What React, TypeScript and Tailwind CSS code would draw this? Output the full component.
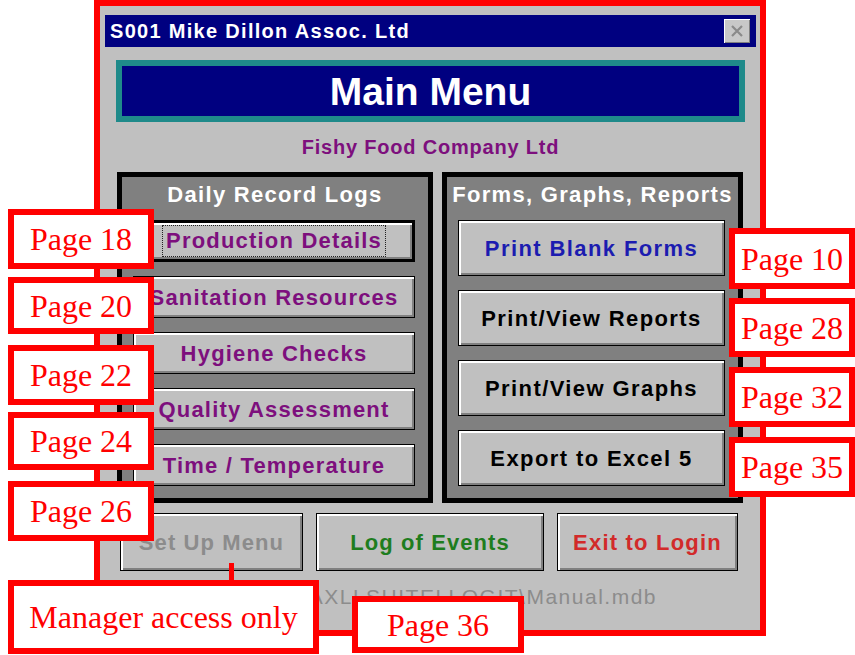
import React from 'react'

const btn =
  'flex items-center justify-center bg-[#c0c0c0] border border-black shadow-[inset_2px_2px_0_#ffffff,inset_-2px_-2px_0_#808080] font-bold'

const leftButtons = [
  { label: 'Production Details', focused: true },
  { label: 'Sanitation Resources' },
  { label: 'Hygiene Checks' },
  { label: 'Quality Assessment' },
  { label: 'Time / Temperature' },
]

const rightButtons = [
  { label: 'Print Blank Forms', color: 'text-[#1c1cb0]' },
  { label: 'Print/View Reports', color: 'text-black' },
  { label: 'Print/View Graphs', color: 'text-black' },
  { label: 'Export to Excel 5', color: 'text-black' },
]

// callout boxes laid over the form
const notes = [
  { text: 'Page 18', cls: 'left-[8px] top-[209px] w-[146px] h-[60px]' },
  { text: 'Page 20', cls: 'left-[8px] top-[277px] w-[146px] h-[57px]' },
  { text: 'Page 22', cls: 'left-[8px] top-[345px] w-[146px] h-[60px]' },
  { text: 'Page 24', cls: 'left-[8px] top-[412px] w-[146px] h-[58px]' },
  { text: 'Page 26', cls: 'left-[8px] top-[481px] w-[146px] h-[60px]' },
  { text: 'Page 10', cls: 'left-[729px] top-[228px] w-[126px] h-[61px]' },
  { text: 'Page 28', cls: 'left-[729px] top-[298px] w-[126px] h-[59px]' },
  { text: 'Page 32', cls: 'left-[729px] top-[367px] w-[126px] h-[60px]' },
  { text: 'Page 35', cls: 'left-[729px] top-[437px] w-[126px] h-[60px]' },
  { text: 'Manager access only', cls: 'left-[8px] top-[580px] w-[311px] h-[74px]' },
  { text: 'Page 36', cls: 'left-[352px] top-[596px] w-[172px] h-[57px]' },
]

export default function App() {
  return (
    <div className="relative w-[855px] h-[655px] bg-white overflow-hidden font-['Liberation_Sans',Arial,sans-serif]">
      {/* red outline round the whole form */}
      <div className="ml-[94px] w-[672px] h-[636px] border-[6px] border-[#ff0000] bg-[#c0c0c0] flex flex-col pt-[9px] pl-[5px] pr-[4px]">
        {/* Title bar */}
        <div className="h-[32px] bg-[#000080] flex items-center justify-between pl-[5px] pr-[6px]">
          <span className="text-white font-bold text-[20px] tracking-[1.3px] leading-none">S001 Mike Dillon Assoc. Ltd</span>
          <div className="w-[26px] h-[24px] bg-[#c8c8c8] shadow-[inset_1px_1px_0_#ffffff,inset_-1px_-1px_0_#808080] flex items-center justify-center">
            <svg width="14" height="12" viewBox="0 0 14 12">
              <path d="M2 1 L12 11 M12 1 L2 11" stroke="#8a8a8a" strokeWidth="2.2" />
            </svg>
          </div>
        </div>

        {/* Banner */}
        <div className="mt-[13px] mx-[11px] h-[62px] border-[6px] border-[#1f8a8a] bg-[#000080] flex items-center justify-center">
          <span className="text-white font-bold text-[39px] leading-none">Main Menu</span>
        </div>

        <div className="h-[50px] flex items-center justify-center">
          <span className="text-[#7d0f7d] font-bold text-[20px] tracking-[0.8px]">Fishy Food Company Ltd</span>
        </div>

        {/* Button groups */}
        <div className="flex gap-[9px] pl-[12px] pr-[13px]">
          <div className="w-[316px] h-[331px] border-[5px] border-black bg-[#808080] flex flex-col">
            <div className="h-[34px] mb-[9px] flex items-center justify-center text-white font-bold text-[22px] tracking-[1.3px]">
              Daily Record Logs
            </div>
            <div className="flex flex-col gap-[14px] pl-[11px] pr-[13px]">
              {leftButtons.map((b) => (
                <div
                  key={b.label}
                  className={`${btn} h-[42px] text-[#7d0f7d] text-[22px] tracking-[1.2px] ${b.focused ? 'border-[3px]' : ''}`}
                >
                  {b.focused ? (
                    <span className="border border-dotted border-[#222] px-[3px] leading-[30px]">{b.label}</span>
                  ) : (
                    b.label
                  )}
                </div>
              ))}
            </div>
          </div>

          <div className="flex-1 h-[331px] border-[5px] border-black bg-[#808080] flex flex-col">
            <div className="h-[34px] mb-[9px] flex items-center justify-center text-white font-bold text-[22px] tracking-[1.3px] whitespace-nowrap">
              Forms, Graphs, Reports
            </div>
            <div className="flex flex-col gap-[14px] pl-[11px] pr-[13px]">
              {rightButtons.map((b) => (
                <div key={b.label} className={`${btn} h-[56px] text-[22px] tracking-[1.4px] ${b.color}`}>
                  {b.label}
                </div>
              ))}
            </div>
          </div>
        </div>

        {/* Bottom row */}
        <div className="mt-[10px] flex gap-[13px] pl-[15px]">
          <div className={`${btn} w-[183px] h-[58px] text-[22px] tracking-[1.1px] text-[#8c8c8c]`}>Set Up Menu</div>
          <div className={`${btn} w-[228px] h-[58px] text-[22px] tracking-[1.1px] text-[#1e7d1e]`}>Log of Events</div>
          <div className={`${btn} w-[181px] h-[58px] text-[22px] tracking-[1.2px] text-[#d22a2a]`}>Exit to Login</div>
        </div>

        <div className="h-[52px] flex items-center justify-end pr-[99px]">
          <span className="text-[#8c8c8c] text-[21px] tracking-[1.5px]">MAXLLSHITELLOGIT\Manual.mdb</span>
        </div>
      </div>

      {/* connector from Set Up Menu to its note */}
      <div className="absolute left-[229px] top-[563px] w-[5px] h-[18px] bg-[#ff0000]" />

      {notes.map((n) => (
        <div
          key={n.text}
          className={`absolute ${n.cls} bg-white border-[6px] border-[#ff0000] flex items-center justify-center text-[#ff0000] text-[32px] font-['Liberation_Serif','Times_New_Roman',serif] whitespace-nowrap`}
        >
          {n.text}
        </div>
      ))}
    </div>
  )
}
